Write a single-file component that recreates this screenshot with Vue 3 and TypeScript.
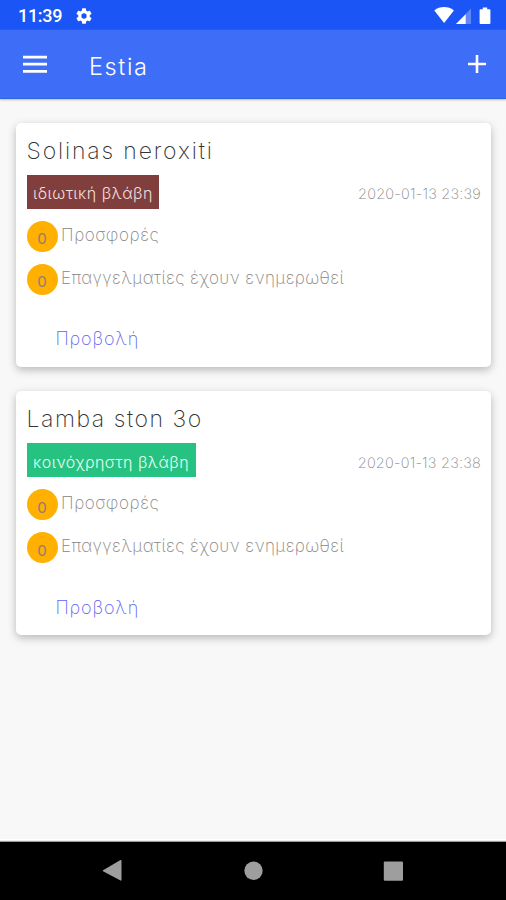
<script setup lang="ts">
interface Issue {
  id: number
  title: string
  kind: 'private' | 'shared'
  label: string
  date: string
  offers: number
  notified: number
}

const issues: Issue[] = [
  { id: 1, title: 'Solinas neroxiti', kind: 'private', label: 'ιδιωτική βλάβη', date: '2020-01-13 23:39', offers: 0, notified: 0 },
  { id: 2, title: 'Lamba ston 3o', kind: 'shared', label: 'κοινόχρηστη βλάβη', date: '2020-01-13 23:38', offers: 0, notified: 0 },
]
</script>

<template>
  <div class="screen">
    <div class="status">
      <span class="clock">11:39</span>
      <svg class="gear" viewBox="2 2 20 20" width="16" height="16">
        <path fill="#fff" d="M19.14 12.94c.04-.3.06-.61.06-.94s-.02-.64-.07-.94l2.03-1.58a.49.49 0 0 0 .12-.61l-1.92-3.32a.49.49 0 0 0-.59-.22l-2.39.96a7 7 0 0 0-1.62-.94l-.36-2.54a.48.48 0 0 0-.48-.41h-3.84a.48.48 0 0 0-.47.41l-.36 2.54a7.4 7.4 0 0 0-1.62.94l-2.39-.96a.48.48 0 0 0-.59.22L2.74 8.87a.48.48 0 0 0 .12.61l2.03 1.58a6 6 0 0 0 0 1.88l-2.03 1.58a.49.49 0 0 0-.12.61l1.92 3.32c.12.22.37.29.59.22l2.39-.96c.5.38 1.03.7 1.62.94l.36 2.54c.05.24.24.41.48.41h3.84c.24 0 .44-.17.47-.41l.36-2.54a7 7 0 0 0 1.62-.94l2.39.96c.22.08.47 0 .59-.22l1.92-3.32a.48.48 0 0 0-.12-.61zM12 15.3a3.3 3.3 0 1 1 0-6.6 3.3 3.3 0 0 1 0 6.6z" />
      </svg>
      <svg class="signals" viewBox="0 0 58 18" width="58" height="18">
        <path fill="#fff" d="M.3 3.4C6-1 14.2-1 19.900 3.400L10.100 16z" />
        <path fill="#fff" opacity=".3" d="M37 1.500V17H22z" />
        <path fill="#fff" d="M31.700 7.200V17H22z" />
        <path fill="#fff" d="M46.500 2.200h2.300V.4h4.400v1.800h2.300a.9.9 0 0 1 .9.9v13a.9.9 0 0 1-.9.9h-9a.9.9 0 0 1-.9-.9v-13a.9.9 0 0 1 .9-.9z" />
      </svg>
    </div>

    <header class="toolbar">
      <svg class="menu" viewBox="0 0 24 18" width="24" height="18">
        <path stroke="#fff" stroke-width="2.800" d="M0 2.100h24M0 9.200h24M0 16.300h24" />
      </svg>
      <h1 class="brand">Estia</h1>
      <svg class="plus" viewBox="0 0 18 18" width="18" height="18">
        <path stroke="#fff" stroke-width="2.600" d="M0 9h18M9 0v18" />
      </svg>
    </header>

    <main class="list">
      <article v-for="issue in issues" :key="issue.id" class="card">
        <h2 class="title" :class="issue.kind">{{ issue.title }}</h2>
        <div class="meta">
          <span class="tag" :class="issue.kind">{{ issue.label }}</span>
          <time class="date">{{ issue.date }}</time>
        </div>
        <div class="row">
          <span class="count">{{ issue.offers }}</span>
          <span class="offers">Προσφορές</span>
        </div>
        <div class="row">
          <span class="count">{{ issue.notified }}</span>
          <span class="notified">Επαγγελματίες έχουν ενημερωθεί</span>
        </div>
        <a class="view">Προβολή</a>
      </article>
    </main>

    <nav class="navbar">
      <svg viewBox="0 0 506 58" width="506" height="58">
        <g fill="#9e9e9e">
          <path d="M103 28.300L120.500 18q1-.4 1 .8v19q0 1.200-1 .8L103 29.300q-.8-.5 0-1z" />
          <circle cx="253.500" cy="28.700" r="9.200" />
          <rect x="383.800" y="19.500" width="19.200" height="19.200" rx="1" />
        </g>
      </svg>
    </nav>
  </div>
</template>

<style>
body {
  margin: 0;
  background: #f8f8f8;
}
</style>

<style scoped>
.screen {
  display: flex;
  flex-direction: column;
  width: 506px;
  height: 900px;
  overflow: hidden;
  background: #f8f8f8;
  font-family: Inter, "Noto Sans", sans-serif;
  font-weight: 200;
}
.status {
  display: flex;
  align-items: center;
  box-sizing: border-box;
  height: 30px;
  padding: 1px 21px 0 18px;
  background: #1c55f5;
}
.clock {
  width: 58px;
  color: #fff;
  font: 500 18px/28px Roboto, sans-serif;
  letter-spacing: -.3px;
}
.signals {
  margin-left: auto;
  margin-right: -7px;
}
.toolbar {
  display: flex;
  align-items: center;
  box-sizing: border-box;
  height: 69px;
  padding: 0 20px 0 23px;
  background: #3e6df7;
  border-bottom: 1px solid #2e66d8;
  box-shadow: 0 1px 2px #b4bfae;
  color: #fff;
}
.menu {
  margin-right: 42px;
}
.brand {
  margin: 6px 0 0;
  font-size: 23.500px;
  font-weight: 300;
  line-height: 30px;
  letter-spacing: 1.600px;
}
.plus {
  margin-left: auto;
}
.list {
  display: flex;
  flex: 1;
  flex-direction: column;
  gap: 24.500px;
  padding: 23.500px 15px 0 16px;
}
.card {
  box-sizing: border-box;
  height: 244px;
  padding: 13px 10px 0 10.500px;
  background: #fff;
  border-radius: 5px;
  box-shadow: 0 3px 8px rgba(0, 0, 0, .26);
  color: #868686;
}
.title {
  margin: 0;
  height: 39px;
  color: #333;
  font-size: 23px;
  font-weight: 200;
  line-height: 31px;
  white-space: nowrap;
}
.title.private { letter-spacing: 1.850px; }
.title.shared { letter-spacing: 1.550px; }
.meta {
  display: flex;
  justify-content: space-between;
  height: 34px;
}
.tag {
  box-sizing: border-box;
  height: 34px;
  padding: 3.500px 0 0 6.500px;
  color: #f3dfdc;
  font-size: 16px;
  font-weight: 300;
  line-height: 31px;
  white-space: nowrap;
}
.tag.private {
  width: 132px;
  background: #803e3d;
  letter-spacing: .5px;
}
.tag.shared {
  width: 169px;
  color: #e2fff0;
  background: #26c281;
  letter-spacing: .45px;
}
.date {
  padding-top: 3.500px;
  font-size: 14.500px;
  line-height: 31px;
  letter-spacing: .22px;
}
.row {
  display: flex;
  align-items: center;
  gap: 3.500px;
  height: 31px;
  margin-top: 12px;
  font-size: 17px;
  white-space: nowrap;
}
.row > span:last-child {
  margin-top: -3px;
}
.offers { letter-spacing: .6px; }
.notified { letter-spacing: .39px; }
.count {
  box-sizing: border-box;
  width: 31px;
  height: 31px;
  padding-top: 3.500px;
  border-radius: 50%;
  background: #ffb000;
  color: #937d6b;
  font-size: 15px;
  font-weight: 400;
  line-height: 30px;
  text-align: center;
}
.view {
  display: block;
  margin: 29.500px 0 0 29px;
  color: #5e65f2;
  font-size: 18px;
  line-height: 30px;
  letter-spacing: .85px;
}
.navbar {
  height: 58px;
  background: #000;
  box-shadow: 0 -1px 1px #999, 0 -3px 0 #fff;
}
.navbar svg {
  display: block;
}
</style>
